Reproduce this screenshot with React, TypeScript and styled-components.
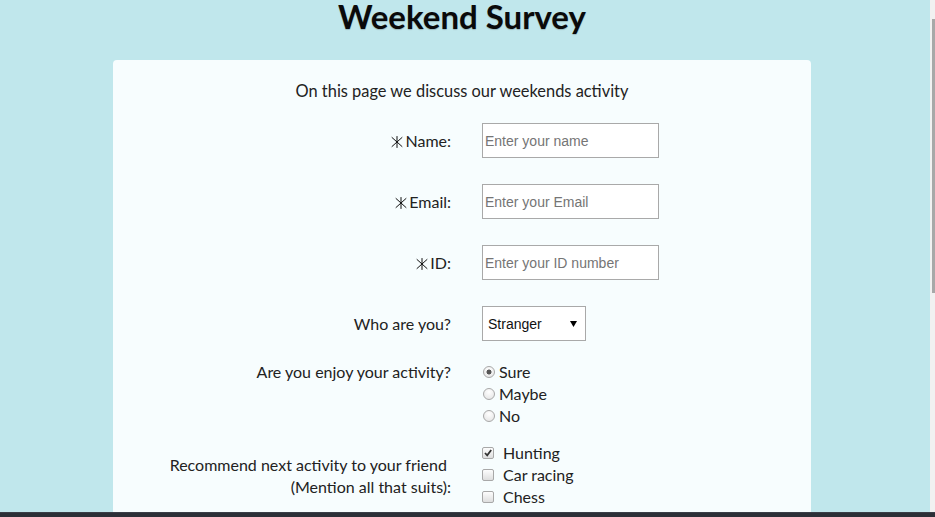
import React from "react";
import styled, { createGlobalStyle } from "styled-components";

const GlobalStyle = createGlobalStyle`
  html, body {
    margin: 0;
    padding: 0;
    overflow: hidden;
  }
  body {
    font-family: "Lato", "Noto Sans", sans-serif;
    color: #222;
  }
`;

const Frame = styled.div`
  display: grid;
  grid-template-columns: 930px 5px;
  grid-template-rows: 512px 5px;
  width: 935px;
  height: 517px;
`;

const Viewport = styled.main`
  overflow: hidden;
  background: #c0e7ec;
  padding: 0 119px 0 113px;
`;

const Title = styled.h1`
  margin: 0;
  height: 60px;
  font-family: "Lato", "Noto Sans", sans-serif;
  font-size: 33px;
  font-weight: 700;
  line-height: 32px;
  text-align: center;
  color: #0a0a0a;
  text-shadow: 0 1px 1px rgba(0, 0, 0, 0.2);
`;

const Card = styled.section`
  background: #f7fdfe;
  border-radius: 4px 4px 0 0;
  padding: 21px 0 40px;
  min-height: 600px;
`;

const Intro = styled.p`
  margin: 0 0 22px;
  font-size: 16.4px;
  line-height: 20px;
  text-align: center;
  color: #222;
`;

const Form = styled.form`
  display: grid;
  grid-template-columns: 338px 1fr;
  column-gap: 31px;
`;

const Row = styled.div<{ $gap: number }>`
  display: contents;
  & > * {
    margin-bottom: ${(p) => p.$gap}px;
  }
`;

const Label = styled.label<{ $top?: boolean; $pad?: number }>`
  align-self: ${(p) => (p.$top ? "start" : "center")};
  padding-top: ${(p) => p.$pad ?? 0}px;
  text-align: right;
  font-size: 16px;
  line-height: 22px;
  color: #222;
`;

const StarIcon = styled.svg`
  width: 12px;
  height: 12px;
  margin-right: 2px;
  vertical-align: -1px;
`;

const Star = () => (
  <StarIcon viewBox="0 0 12 12" aria-hidden="true">
    <g stroke="#111" strokeWidth="1" fill="none" strokeLinecap="round">
      <line x1="6" y1="0.5" x2="6" y2="11.5" />
      <line x1="1" y1="1.5" x2="11" y2="10.5" />
      <line x1="11" y1="1.5" x2="1" y2="10.5" />
    </g>
  </StarIcon>
);

const TextInput = styled.input`
  box-sizing: border-box;
  width: 177px;
  height: 35px;
  padding: 1px 2px;
  border: 1px solid #a9a9a9;
  background: #fff;
  font-family: "Liberation Sans", Arial, sans-serif;
  font-size: 14px;
  color: #222;
  outline: none;
  justify-self: start;
  &::placeholder {
    color: #757575;
  }
`;

const Select = styled.select`
  box-sizing: border-box;
  width: 104px;
  height: 35px;
  padding: 0 0 0 5px;
  border: 1px solid #a9a9a9;
  border-radius: 0;
  appearance: none;
  background: #fff
    url("data:image/svg+xml;utf8,<svg xmlns='http://www.w3.org/2000/svg' width='7' height='6'><polygon points='0,0 7,0 3.5,6' fill='black'/></svg>")
    no-repeat right 8px center;
  font-family: "Liberation Sans", Arial, sans-serif;
  font-size: 14px;
  color: #111;
  justify-self: start;
`;

const OptionList = styled.div`
  display: flex;
  flex-direction: column;
`;

const Option = styled.label<{ $gap: number }>`
  display: flex;
  align-items: center;
  gap: ${(p) => p.$gap}px;
  height: 22px;
  font-size: 16px;
  color: #222;
`;

const Radio = styled.input`
  appearance: none;
  box-sizing: border-box;
  width: 12px;
  height: 12px;
  margin: 1px 0 0 1px;
  border-radius: 50%;
  border: 1px solid #a8a8a8;
  background: radial-gradient(circle at 50% 30%, #ffffff, #e2e2e2);
  &:checked {
    background: radial-gradient(circle, #555 0, #555 2.2px, transparent 2.8px),
      radial-gradient(circle at 50% 30%, #ffffff, #e2e2e2);
  }
`;

const Check = styled.input`
  appearance: none;
  box-sizing: border-box;
  width: 12px;
  height: 12px;
  margin: 1px 0 0;
  border-radius: 2px;
  border: 1px solid #a8a8a8;
  background: linear-gradient(#fdfdfd, #dedede);
  &:checked {
    background: url("data:image/svg+xml;utf8,<svg xmlns='http://www.w3.org/2000/svg' width='10' height='10'><path d='M2 5 L4.2 7.3 L8.2 2' stroke='%23333' stroke-width='1.8' fill='none'/></svg>")
        no-repeat center,
      linear-gradient(#fdfdfd, #dedede);
  }
`;

const ScrollTrack = styled.div`
  background: #f1f1f1;
  padding: 19px 0 0 2px;
`;

const Thumb = styled.div`
  height: 274px;
  background: #a8a8a8;
`;

const TaskBar = styled.footer`
  grid-column: 1 / span 2;
  background: #2c2f37;
  border-top: 1px solid #3a3e47;
`;

export default function App() {
  return (
    <>
      <GlobalStyle />
      <Frame>
        <Viewport>
          <Title>Weekend Survey</Title>
          <Card>
            <Intro>On this page we discuss our weekends activity</Intro>
            <Form onSubmit={(e) => e.preventDefault()}>
              <Row $gap={26}>
                <Label htmlFor="name">
                  <Star />
                  Name:
                </Label>
                <TextInput id="name" placeholder="Enter your name" />
              </Row>
              <Row $gap={26}>
                <Label htmlFor="email">
                  <Star />
                  Email:
                </Label>
                <TextInput id="email" placeholder="Enter your Email" />
              </Row>
              <Row $gap={26}>
                <Label htmlFor="id">
                  <Star />
                  ID:
                </Label>
                <TextInput id="id" placeholder="Enter your ID number" />
              </Row>
              <Row $gap={19}>
                <Label htmlFor="who">Who are you?</Label>
                <Select id="who" defaultValue="Stranger">
                  <option>Stranger</option>
                  <option>Friend</option>
                  <option>Family</option>
                </Select>
              </Row>
              <Row $gap={15}>
                <Label $top $pad={1}>
                  Are you enjoy your activity?
                </Label>
                <OptionList>
                  <Option $gap={4}>
                    <Radio type="radio" name="enjoy" defaultChecked />
                    Sure
                  </Option>
                  <Option $gap={4}>
                    <Radio type="radio" name="enjoy" />
                    Maybe
                  </Option>
                  <Option $gap={4}>
                    <Radio type="radio" name="enjoy" />
                    No
                  </Option>
                </OptionList>
              </Row>
              <Row $gap={15}>
                <Label $top $pad={13}>
                  Recommend next activity to your friend&nbsp;
                  <br />
                  (Mention all that suits):
                </Label>
                <OptionList>
                  <Option $gap={9}>
                    <Check type="checkbox" defaultChecked />
                    Hunting
                  </Option>
                  <Option $gap={9}>
                    <Check type="checkbox" />
                    Car racing
                  </Option>
                  <Option $gap={9}>
                    <Check type="checkbox" />
                    Chess
                  </Option>
                  <Option $gap={9}>
                    <Check type="checkbox" aria-label="more" />
                  </Option>
                </OptionList>
              </Row>
            </Form>
          </Card>
        </Viewport>
        <ScrollTrack>
          <Thumb />
        </ScrollTrack>
        <TaskBar />
      </Frame>
    </>
  );
}
